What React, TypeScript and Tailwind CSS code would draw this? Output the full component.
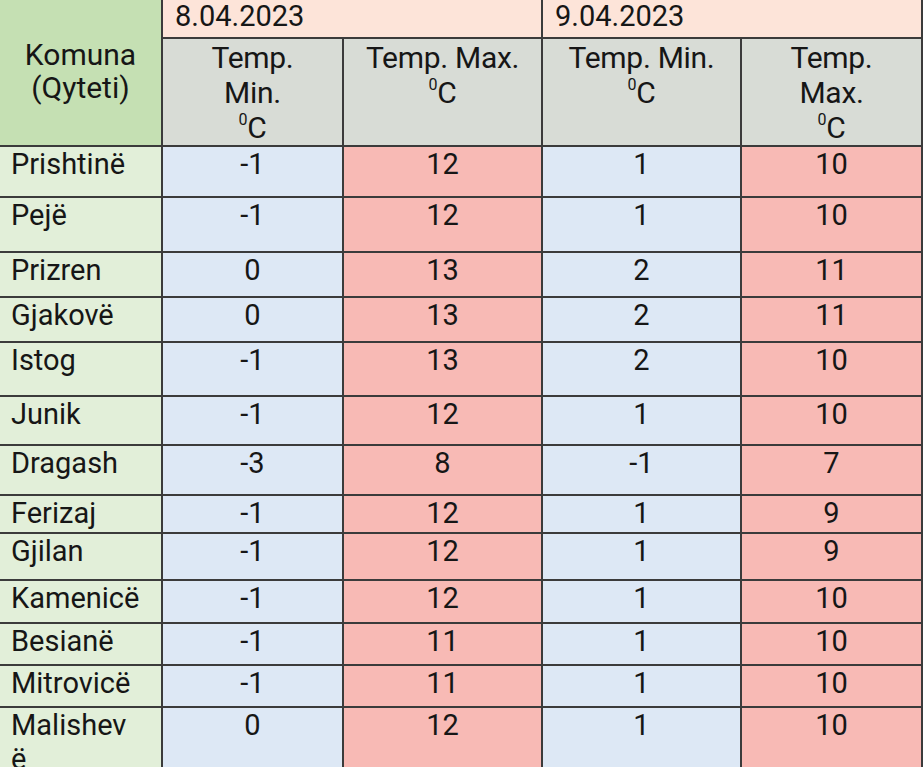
import React from 'react'

type Row = { city: React.ReactNode; h: number; v: [string, string, string, string] }

const rows: Row[] = [
  { city: 'Prishtinë', h: 51, v: ['-1', '12', '1', '10'] },
  { city: 'Pejë', h: 55, v: ['-1', '12', '1', '10'] },
  { city: 'Prizren', h: 45, v: ['0', '13', '2', '11'] },
  { city: 'Gjakovë', h: 45, v: ['0', '13', '2', '11'] },
  { city: 'Istog', h: 54, v: ['-1', '13', '2', '10'] },
  { city: 'Junik', h: 49, v: ['-1', '12', '1', '10'] },
  { city: 'Dragash', h: 50, v: ['-3', '8', '-1', '7'] },
  { city: 'Ferizaj', h: 38, v: ['-1', '12', '1', '9'] },
  { city: 'Gjilan', h: 47, v: ['-1', '12', '1', '9'] },
  { city: 'Kamenicë', h: 43, v: ['-1', '12', '1', '10'] },
  { city: 'Besianë', h: 42, v: ['-1', '11', '1', '10'] },
  { city: 'Mitrovicë', h: 42, v: ['-1', '11', '1', '10'] },
  { city: <>Malishev<br />ë</>, h: 90, v: ['0', '12', '1', '10'] },
]

const Deg = () => (
  <>
    <sup className="relative -top-[2px] text-[16px] align-super">0</sup>C
  </>
)

export default function App() {
  const bd = 'border-2 border-[#3b3b3b]'
  const sub = `${bd} bg-[#d8dcd6] pt-[1px] text-center align-top text-[30px] font-normal leading-[35px] tracking-[-0.3px]`
  const date = `${bd} border-t-0 bg-[#fde4d9] pl-[12px] text-left align-top text-[29px] font-normal leading-[32px]`
  return (
    <div
      className="h-[767px] w-[923px] overflow-hidden bg-white text-[#161616]"
      style={{ fontFamily: 'Roboto, "Noto Sans", sans-serif' }}
    >
      <table className="w-[922px] table-fixed border-collapse">
        <colgroup>
          <col className="w-[162px]" />
          <col className="w-[181px]" />
          <col className="w-[199px]" />
          <col className="w-[199px]" />
          <col className="w-[181px]" />
        </colgroup>
        <thead>
          <tr className="h-[38px]">
            <th
              rowSpan={2}
              className={`${bd} border-l-0 border-t-0 bg-[#c5e0b3] pb-[4px] text-center align-middle text-[30px] font-normal leading-[33px]`}
            >
              Komuna
              <br />
              (Qyteti)
            </th>
            <th colSpan={2} className={date}>
              8.04.2023
            </th>
            <th colSpan={2} className={date}>
              9.04.2023
            </th>
          </tr>
          <tr className="h-[107px]">
            <th className={sub}>
              Temp.
              <br />
              Min.
              <br />
              <Deg />
            </th>
            <th className={sub}>
              Temp. Max.
              <br />
              <Deg />
            </th>
            <th className={sub}>
              Temp. Min.
              <br />
              <Deg />
            </th>
            <th className={sub}>
              Temp.
              <br />
              Max.
              <br />
              <Deg />
            </th>
          </tr>
        </thead>
        <tbody className="text-[29px] leading-[34px]">
          {rows.map((r, i) => (
            <tr key={i} style={{ height: r.h }}>
              <td className={`${bd} border-l-0 bg-[#e2efd9] pl-[11px] pt-0 align-top`}>{r.city}</td>
              <td className={`${bd} bg-[#dde8f5] pt-0 text-center align-top`}>{r.v[0]}</td>
              <td className={`${bd} bg-[#f8bab5] pt-0 text-center align-top`}>{r.v[1]}</td>
              <td className={`${bd} bg-[#dde8f5] pt-0 text-center align-top`}>{r.v[2]}</td>
              <td className={`${bd} bg-[#f8bab5] pt-0 text-center align-top`}>{r.v[3]}</td>
            </tr>
          ))}
        </tbody>
      </table>
    </div>
  )
}
